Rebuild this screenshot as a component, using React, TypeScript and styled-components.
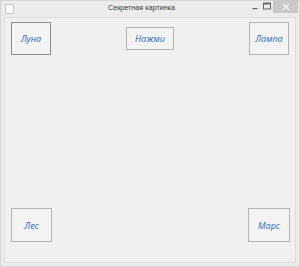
import React from "react";
import styled, { createGlobalStyle } from "styled-components";

const GlobalStyle = createGlobalStyle`
  html, body {
    margin: 0;
    padding: 0;
    background: #ececec;
  }
`;

const Window = styled.div`
  width: 300px;
  height: 267px;
  box-sizing: border-box;
  display: flex;
  flex-direction: column;
  background: #ececec;
  border: 1px solid #d6d6d6;
  font-family: "Liberation Sans", "Open Sans", sans-serif;
`;

const TitleBar = styled.div`
  height: 15px;
  display: flex;
  align-items: flex-start;
`;

const AppIcon = styled.div`
  width: 7px;
  height: 8px;
  margin: 3px 0 0 4px;
  background: #fff;
  border: 1px solid #c8c8c8;
`;

const Title = styled.div`
  flex: 1;
  text-align: center;
  font-size: 7.2px;
  line-height: 14px;
  color: #3a3a3a;
  padding-left: 20px;
`;

const Controls = styled.div`
  display: flex;
  align-items: flex-start;
`;

const CtrlButton = styled.div<{ $close?: boolean }>`
  width: ${(p) => (p.$close ? "25px" : "12px")};
  height: ${(p) => (p.$close ? "13px" : "12px")};
  margin-top: -1px;
  display: flex;
  align-items: center;
  justify-content: center;
  background: ${(p) => (p.$close ? "#c9c9c9" : "transparent")};
  margin-right: ${(p) => (p.$close ? "1px" : "0")};
`;

const Client = styled.div`
  flex: 1;
  margin: 1px 3px 3px 3px;
  border: 1px solid #dcdcdc;
  background: #f0f0f0;
  display: flex;
  flex-direction: column;
  justify-content: space-between;
  padding: 4px 6px 20px 6px;
`;

const Row = styled.div<{ $edge?: number }>`
  display: flex;
  justify-content: space-between;
  align-items: flex-start;
  margin-right: ${(p) => p.$edge ?? 0}px;
`;

const Button = styled.button<{ $w: number; $h: number; $top?: number; $focus?: boolean }>`
  width: ${(p) => p.$w}px;
  height: ${(p) => p.$h}px;
  margin-top: ${(p) => p.$top ?? 0}px;
  padding: 0;
  box-sizing: border-box;
  background: #f3f3f3;
  border: 1px solid ${(p) => (p.$focus ? "#8c8c8c" : "#b4b4b4")};
  border-radius: 0;
  font-family: "Open Sans", "Liberation Sans", sans-serif;
  font-style: italic;
  font-size: 9px;
  color: #2a6bc0;
  cursor: default;
`;

export default function App() {
  return (
    <>
      <GlobalStyle />
      <Window>
        <TitleBar>
          <AppIcon />
          <Title>Секретная картинка</Title>
          <Controls>
            <CtrlButton>
              <svg width="8" height="8" viewBox="0 0 8 8">
                <rect x="1.5" y="6" width="5" height="1.2" fill="#666" />
              </svg>
            </CtrlButton>
            <CtrlButton>
              <svg width="8" height="8" viewBox="0 0 8 8">
                <rect x="0.5" y="1" width="7" height="6" fill="none" stroke="#666" />
                <rect x="0.5" y="1" width="7" height="1.5" fill="#666" />
              </svg>
            </CtrlButton>
            <CtrlButton $close>
              <svg width="8" height="8" viewBox="0 0 8 8">
                <path d="M1 1 L7 7 M7 1 L1 7" stroke="#f4f4f4" strokeWidth="1.4" />
              </svg>
            </CtrlButton>
          </Controls>
        </TitleBar>
        <Client>
          <Row>
            <Button $w={40} $h={33} $focus>Луна</Button>
            <Button $w={48} $h={23} $top={5}>Нажми</Button>
            <Button $w={40} $h={33}>Лампа</Button>
          </Row>
          <Row $edge={-1}>
            <Button $w={41} $h={34}>Лес</Button>
            <Button $w={42} $h={34}>Марс</Button>
          </Row>
        </Client>
      </Window>
    </>
  );
}
